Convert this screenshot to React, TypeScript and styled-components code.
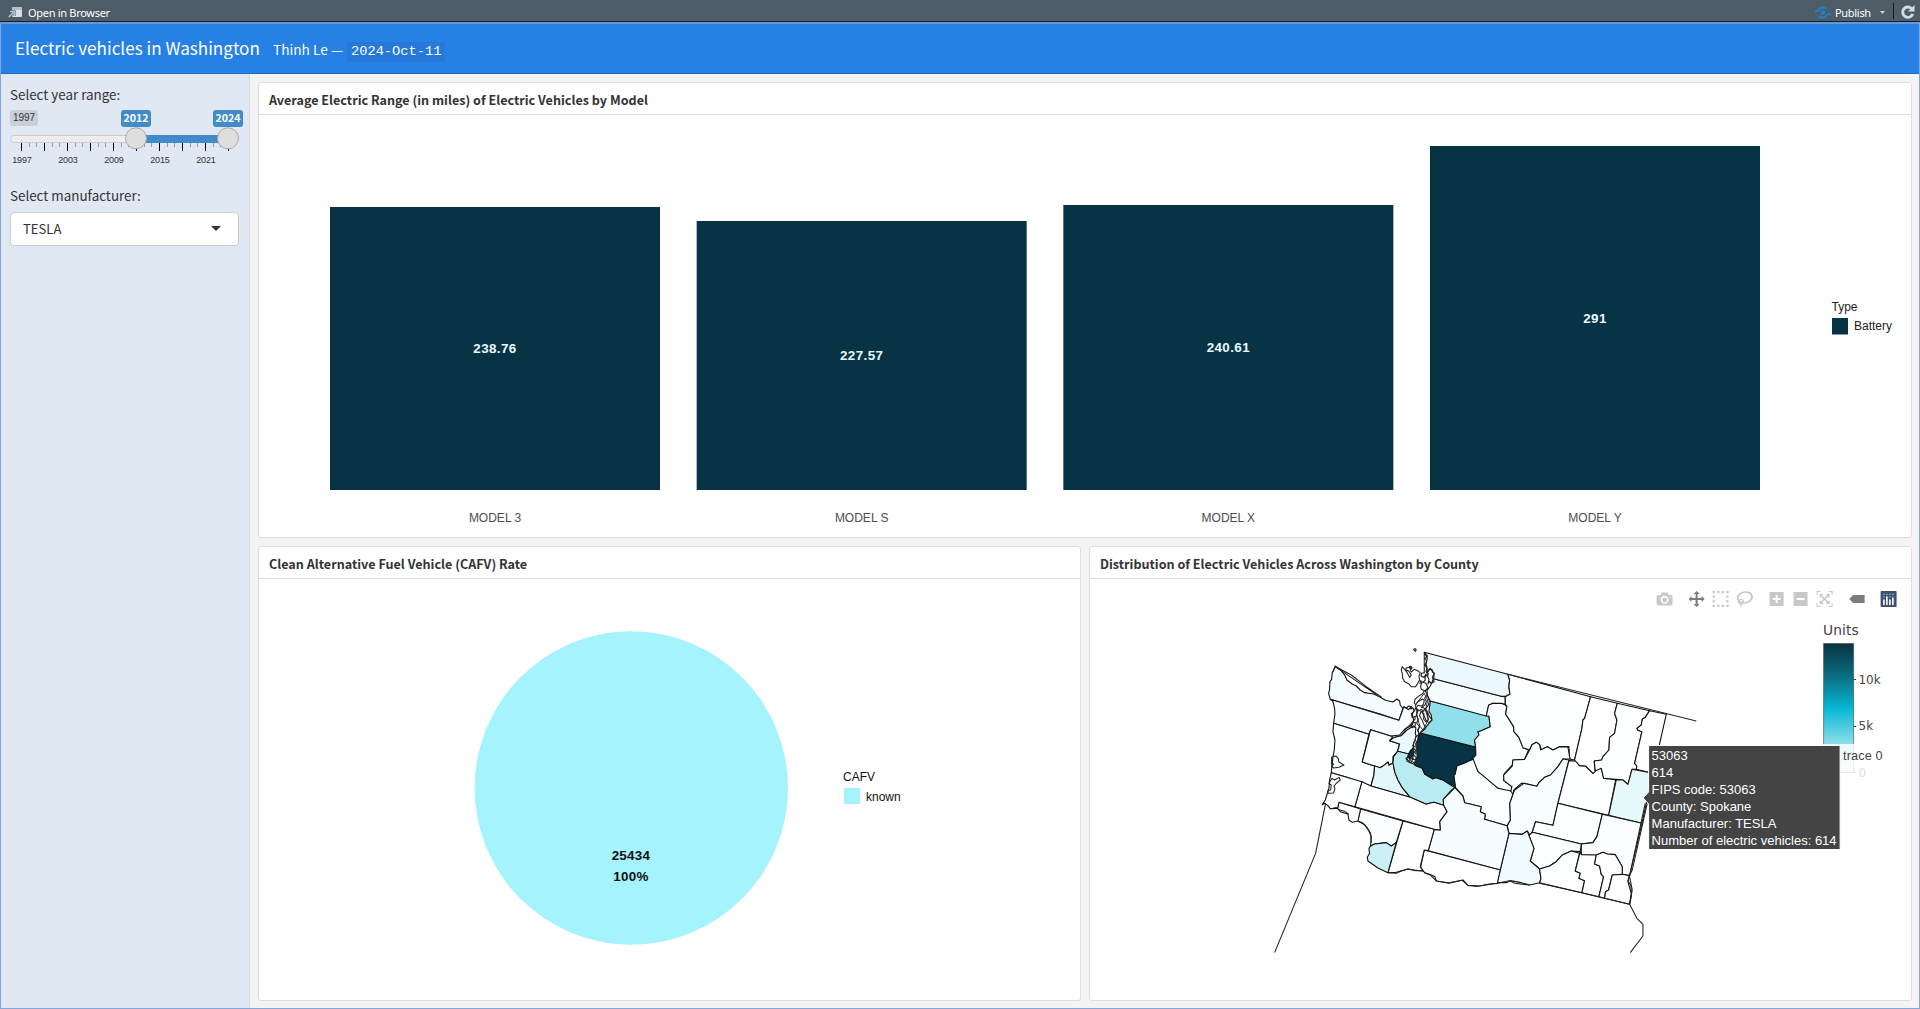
import React from 'react';
import styled, { createGlobalStyle } from 'styled-components';

const ui = `"Noto Sans CJK SC", "Noto Sans", sans-serif`;
const arial = `"Liberation Sans", Arial, sans-serif`;

const GlobalStyle = createGlobalStyle`
  * { box-sizing: border-box; }
  body { margin: 0; background: #f4f4f4; font-family: ${ui}; color: #333; }
`;

const Viewer = styled.div`
  display: flex;
  flex-direction: column;
  width: 1920px;
  height: 1009px;
  overflow: hidden;
`;

const Toolbar = styled.div`
  display: flex;
  flex: none;
  align-items: center;
  height: 22px;
  padding: 4px 5px 0 8px;
  background: #4e5c68;
  border-bottom: 1px solid #0f2233;
  color: #fff;
  font: 11px/16px "Noto Sans", sans-serif;
`;

const ToolbarText = styled.span<{ $width: number; $gap: number }>`
  width: ${p => p.$width}px;
  margin-left: ${p => p.$gap}px;
  white-space: nowrap;
  letter-spacing: -0.3px;
`;

const Spacer = styled.div`
  flex: 1;
`;

const ToolbarDivider = styled.div`
  width: 1px;
  height: 16px;
  margin: -3px 7px 0 8px;
  background: #101820;
`;

const Frame = styled.div`
  display: flex;
  flex: 1;
  flex-direction: column;
  min-height: 0;
  border: 1px solid #83a7dc;
  border-top: 2px solid #6d96cd;
`;

const Header = styled.header`
  display: flex;
  flex: none;
  align-items: baseline;
  height: 50px;
  padding: 10px 14px 0;
  background: #2780e3;
  border-bottom: 1px solid #186dc8;
  color: #fff;
`;

const Title = styled.h1`
  width: 258px;
  margin: 0;
  font-size: 17.1px;
  font-weight: 400;
  line-height: 27px;
  white-space: nowrap;
`;

const Author = styled.span`
  width: 74px;
  font-size: 13.7px;
  font-weight: 400;
  white-space: nowrap;
`;

const DateCode = styled.code`
  padding: 2px 4px;
  border-radius: 2px;
  background: #2679d8;
  font: 13.7px/16px "Liberation Mono", monospace;
`;

const Page = styled.div`
  display: flex;
  flex: 1;
  min-height: 0;
`;

const Sidebar = styled.aside`
  display: flex;
  flex: none;
  flex-direction: column;
  width: 249px;
  padding: 8px 9px 0;
  background: #e0e8f3;
  border-right: 1px solid #dadde2;
`;

const FieldLabel = styled.label`
  height: 24px;
  font-size: 13.4px;
  line-height: 24px;
  white-space: nowrap;
`;

const Slider = styled.div`
  position: relative;
  width: 230px;
  height: 77px;
  margin-top: 1px;
  margin-bottom: -1px;
`;

const SliderBadge = styled.span<{ $left: number; $muted?: boolean }>`
  position: absolute;
  top: 3px;
  left: ${p => p.$left}px;
  width: ${p => (p.$muted ? 28 : 30)}px;
  height: ${p => (p.$muted ? 16 : 17)}px;
  border-radius: 3px;
  background: ${p => (p.$muted ? '#c9d0da' : '#428bca')};
  color: ${p => (p.$muted ? '#333' : '#fff')};
  font-family: ${p => (p.$muted ? arial : ui)};
  font-size: ${p => (p.$muted ? 10 : 10.6)}px;
  font-weight: ${p => (p.$muted ? 400 : 700)};
  line-height: 16px;
  text-align: center;
`;

const SliderScale = styled.svg`
  display: block;
  width: 240px;
  height: 70px;
  overflow: visible;
`;

const Select = styled.div`
  display: flex;
  align-items: center;
  justify-content: space-between;
  width: 229px;
  height: 34px;
  margin-top: 5px;
  padding: 0 17px 2px 12px;
  border: 1px solid #ccc;
  border-radius: 4px;
  background: #fff;
  font-size: 13.1px;
`;

const Caret = styled.div`
  border: 5px solid transparent;
  border-top-color: #333;
  border-bottom-width: 0;
`;

const Main = styled.main`
  display: flex;
  flex: 1;
  flex-direction: column;
  gap: 8px;
  padding: 8px 7px 7px 8px;
  background: #f4f4f4;
`;

const Row = styled.div<{ $height?: number }>`
  display: flex;
  flex: ${p => (p.$height ? 'none' : 1)};
  height: ${p => (p.$height ? p.$height + 'px' : 'auto')};
  gap: 8px;
  min-height: 0;
`;

const Card = styled.section`
  display: flex;
  flex: 1;
  flex-direction: column;
  min-width: 0;
  border: 1px solid #dedede;
  border-radius: 3px;
  background: #fff;
`;

const CardTitle = styled.h2`
  flex: none;
  height: 32px;
  margin: 0;
  padding: 1px 10px 0;
  border-bottom: 1px solid #dedede;
  font-size: 12.6px;
  font-weight: 700;
  line-height: 32px;
  white-space: nowrap;
`;

const Plot = styled.svg`
  display: block;
  flex: 1;
  min-height: 0;
  width: 100%;
  overflow: visible;
  font-family: ${arial};
`;

const models = [
  { name: 'MODEL 3', range: 238.76, labelY: 353 },
  { name: 'MODEL S', range: 227.57, labelY: 360 },
  { name: 'MODEL X', range: 240.61, labelY: 352 },
  { name: 'MODEL Y', range: 291, labelY: 323.3 },
];

function RangeChart() {
  return (
    <Plot viewBox="259 115 1652 422" preserveAspectRatio="none">
      {models.map((m, i) => {
        const h = Math.ceil((m.range / 291) * 344 - 0.1);
        const x = 330 + i * 366.67;
        return (
          <g key={m.name} textAnchor="middle">
            <rect x={x} y={490 - h} width={330} height={h} fill="#083344" />
            <text x={x + 165} y={m.labelY} fontSize="13.4" fontWeight="700" letterSpacing="0.4" fill="#e8fbff">{m.range}</text>
            <text x={x + 165} y={522} fontSize="12" fill="#4d4d4d">{m.name}</text>
          </g>
        );
      })}
      <text x="1831.5" y="311" fontSize="12" fill="#222">Type</text>
      <rect x="1832" y="318" width="16" height="16.5" fill="#083344" />
      <text x="1854" y="330.2" fontSize="12" fill="#222">Battery</text>
    </Plot>
  );
}

function CafvChart() {
  return (
    <Plot viewBox="259 579 821 421" preserveAspectRatio="none">
      <circle cx="631.3" cy="788" r="156.7" fill="#a5f3fc" />
      <g fontSize="13.4" fontWeight="700" textAnchor="middle" letterSpacing="0.3" fill="#111">
        <text x="631" y="860.4">25434</text>
        <text x="631" y="881.4">100%</text>
      </g>
      <text x="843" y="781" fontSize="12" fill="#111">CAFV</text>
      <rect x="844" y="788" width="16" height="16" fill="#a5f3fc" />
      <text x="866" y="801" fontSize="12" fill="#111">known</text>
    </Plot>
  );
}

/* County outlines, in thirds of a pixel from the map's own origin. */
const counties: { name: string; fill: string; points: string }[] = [
  { name: 'Clallam', fill: '#f5fcff', points: '77,80 68,98 66,118 61,125 60,148 57,160 62,178 212,222 268,241 280,205 272,195 270,183 262,177 250,186 228,181 210,170 192,162 165,158 152,150 140,138 128,132 112,120 105,105 95,92' },
  { name: 'Jefferson', fill: '#f7fdff', points: '62,178 70,184 75,205 76,222 72,250 178,283 183,269 244,288 270,285 285,268 308,255 312,240 308,222 314,210 305,200 297,209 283,200 268,241' },
  { name: 'Grays Harbor', fill: '#fcffff', points: '72,250 70,275 76,300 74,330 70,352 65,398 110,411 184,438 193,405 195,378 158,366 178,283' },
  { name: 'Mason', fill: '#fbffff', points: '183,269 158,366 195,378 210,383 225,375 235,366 238,374 250,370 250,350 264,334 270,312 240,302 250,290' },
  { name: 'Kitsap', fill: '#eaf9fe', points: '240,302 255,292 275,287 292,270 312,258 319,264 317,280 321,292 312,310 311,325 302,332 297,342 264,334 270,312' },
  { name: 'Thurston', fill: '#e5f7fd', points: '195,378 213,383 226,374 236,366 238,376 252,368 252,380 256,398 265,420 278,443 302,472 184,438 193,405' },
  { name: 'Pierce', fill: '#b8ebf2', points: '264,334 298,342 291,356 300,366 312,372 320,378 338,385 345,402 370,417 378,410 400,420 436,443 427,449 401,478 402,496 373,487 362,489 350,493 302,472 278,443 265,420 256,398 250,370 252,350' },
  { name: 'King', fill: '#083344', points: '332,279 496,321 499,345 491,358 460,371 442,378 437,402 433,406 439,440 400,420 378,413 370,416 346,402 338,385 318,376 313,367 319,355 317,320 324,300' },
  { name: 'Vashon', fill: '#083344', points: '311,323 314,335 308,350 298,355 296,346' },
  { name: 'Snohomish', fill: '#91dfeb', points: '362,183 538,228 542,260 515,272 505,275 508,285 495,300 498,321 332,279 345,268 350,260 367,240 365,225 358,215' },
  { name: 'Skagit', fill: '#f6fdff', points: '372,116 575,169 587,170 587,192 550,190 537,196 530,228 362,183 353,165 352,152 362,138' },
  { name: 'Whatcom', fill: '#ebf8fd', points: '344,37 595,103 600,120 598,140 601,163 590,168 575,169 372,116 374,100 362,86 353,98 352,82 349,72 353,55' },
  { name: 'Chelan', fill: '#fbffff', points: '530,228 537,196 550,190 575,190 587,195 592,200 588,222 612,260 613,275 628,292 640,323 657,330 645,358 610,360 608,375 585,400 582,422 605,438 607,460 565,445 540,425 505,395 488,358 499,345 498,321 495,300 508,285 505,275 515,272 542,260 538,228' },
  { name: 'Okanogan', fill: '#fdffff', points: '595,103 843,170 825,235 820,240 817,265 795,360 780,357 778,320 750,320 730,330 713,320 696,330 690,314 680,307 667,314 660,330 640,323 628,292 613,275 612,260 588,222 592,200 587,192 587,170 601,163 598,140 600,120' },
  { name: 'Douglas', fill: '#fdffff', points: '660,330 667,314 680,307 690,314 693,330 713,320 730,330 750,320 775,321 780,350 782,357 760,357 745,380 723,405 705,412 688,428 682,439 643,430 635,430 613,450 610,462 602,460 607,440 583,422 582,405 608,378 610,360 645,358' },
  { name: 'Grant', fill: '#f8fdff', points: '610,462 615,450 643,430 682,439 688,428 705,412 723,405 745,380 760,357 778,360 745,490 730,556 678,545 668,575 662,587 653,573 638,583 598,580 593,557 602,540 600,490' },
  { name: 'Lincoln', fill: '#feffff', points: '778,362 800,363 810,377 828,378 850,400 858,385 875,385 882,412 918,420 897,526 745,490' },
  { name: 'Ferry', fill: '#ffffff', points: '843,170 923,190 915,220 922,240 915,280 900,292 898,330 880,350 876,360 854,363 855,380 857,395 850,400 828,378 810,377 795,360 817,265 820,240 825,235' },
  { name: 'Stevens', fill: '#feffff', points: '923,190 1020,212 1007,232 998,238 995,255 982,265 985,271 997,275 975,370 982,378 980,388 967,388 955,433 940,420 918,418 882,415 875,385 857,393 854,363 876,360 880,350 898,330 900,292 915,280 922,240 915,220' },
  { name: 'Pend Oreille', fill: '#ffffff', points: '1020,212 1070,223 1030,400 980,388 982,378 975,370 997,275 985,271 982,265 995,255 998,238 1007,232' },
  { name: 'Spokane', fill: '#e7f8fb', points: '967,388 1030,400 1010,490 997,550 897,526 920,420 940,420 955,433' },
  { name: 'Adams', fill: '#feffff', points: '745,490 878,523 862,590 850,608 815,612 668,577 678,545 730,556' },
  { name: 'Whitman', fill: '#fbfeff', points: '878,523 997,550 960,707 937,703 938,680 917,644 893,642 880,637 860,645 815,646 815,612 850,608 862,590' },
  { name: 'Franklin', fill: '#fbffff', points: '668,577 815,612 812,635 785,633 758,645 740,665 720,678 690,687 662,663 673,625 658,587' },
  { name: 'Benton', fill: '#f0faff', points: '598,580 638,583 653,573 673,625 662,663 690,687 694,715 690,728 660,735 635,728 602,722 590,728 563,728' },
  { name: 'Walla Walla', fill: '#fbffff', points: '690,687 720,678 740,665 758,645 785,633 810,640 797,693 812,700 808,715 825,722 817,758 690,730 694,715' },
  { name: 'Columbia', fill: '#ffffff', points: '812,633 815,644 860,645 855,672 870,678 875,703 882,710 868,770 817,758 825,722 808,715 812,700 797,693' },
  { name: 'Garfield', fill: '#ffffff', points: '860,645 880,637 893,642 917,644 938,680 938,703 908,705 897,750 888,755 885,775 868,770 882,710 875,703 870,678 855,672' },
  { name: 'Asotin', fill: '#ffffff', points: '908,705 938,703 960,707 955,725 965,760 960,793 885,775 888,755 897,750' },
  { name: 'Kittitas', fill: '#fbffff', points: '491,358 505,395 530,415 565,445 603,453 610,462 600,490 602,540 592,557 525,538 527,523 512,515 515,500 465,488 460,468 438,443 433,406 437,402 442,378 460,371' },
  { name: 'Yakima', fill: '#f7fdff', points: '436,443 460,468 465,488 515,500 512,515 527,523 525,538 592,557 598,580 572,690 356,632 374,568 392,570 390,545 412,515 402,496 401,478' },
  { name: 'Klickitat', fill: '#ffffff', points: '344,630 572,690 563,730 540,732 505,739 475,736 460,720 418,730 380,723 376,710 360,703 345,698 333,682' },
  { name: 'Skamania', fill: '#ffffff', points: '280,543 374,568 356,632 344,630 332,680 340,693 312,691 295,687 260,697 235,698' },
  { name: 'Lewis', fill: '#ffffff', points: '157,425 184,438 302,472 350,493 362,489 373,487 402,496 412,515 390,545 392,570 374,568 136,500' },
  { name: 'Cowlitz', fill: '#fbfeff', points: '153,507 280,543 260,608 245,618 230,608 195,612 183,618 185,590 178,573 165,554 145,543' },
  { name: 'Clark', fill: '#cbf0f7', points: '183,618 195,612 230,608 245,618 260,608 235,698 205,684 175,663 173,652 180,640 178,625' },
  { name: 'Wahkiakum', fill: '#ffffff', points: '88,487 153,507 145,543 128,547 118,540 115,522 92,515 84,505' },
  { name: 'Pacific', fill: '#feffff', points: '65,398 157,425 136,500 88,487 84,505 62,506 55,497 46,490 38,494 47,480 58,445 60,420' },
];

/* Shorelines, straits and islands drawn as open or closed outlines. */
const shores = [
  'M77,80L200,164 M77,80L68,98 M75,77L97,90 125,105 170,140 215,171',
  'M595,103L1160,243',
  'M48,490L18,640 -105,938',
  'M1013,490L968,690 959,708 955,722 964,737 966,765 960,793 982,835 1000,853 1000,888 962,938',
  'M1007,490L960,707 M960,710L968,750 960,793',
  'M66,372L66,352 78,348 86,355 88,366 103,375 88,382 72,384 66,378 72,372Z',
  'M67,415L75,420 88,412 92,420 80,430 73,438 76,446 72,459 56,460 54,452 63,450 65,435 58,430 67,415',
  'M278,80L285,88 293,98 300,112 305,105 298,94 290,90 289,84 303,81 307,84 302,90 305,96 314,88 324,92 332,98 328,108 330,120 322,134 318,140 305,140 297,131 285,125 279,114 278,100 275,90Z',
  'M312,28L316,26 320,30 317,34Z M299,80L304,79 307,84 302,87Z',
  'M344,37L344,100 M346,40L354,48 347,55 351,65 346,75 352,85 349,95 356,100 354,110 348,103 346,115',
  'M352,98L360,86 368,89 368,96 374,100 368,112 374,125 365,130 360,124 355,132 358,118 353,108Z',
  'M344,98L336,100 334,108 341,112 345,108 347,120 340,127 333,122 331,132 M337,126L349,130 355,144 346,153 335,148 333,138Z',
  'M344,153L338,162 325,170 316,178 314,190 319,194 324,186 338,177 344,180 342,191 337,199 325,196 319,204 328,212 335,208 344,214',
  'M347,153L353,165 359,183 356,196 348,206 353,215 360,230 367,240 358,248 350,242 344,229 337,216 347,207',
  'M353,165L345,174 350,184 347,194 338,201 M334,202L343,204 353,218 356,239 349,246 342,237 343,221 334,213 330,228 337,239 342,251 348,264 337,272 330,281',
  'M283,200L291,204 297,198 305,200 303,207 312,205 314,214 305,221 308,233 317,229 316,238 309,246 300,256 288,266 284,276 275,286 256,292',
  'M316,205L325,213 320,226 326,238 321,249 330,260 325,272 328,283 318,290 317,302 311,312 312,325 318,331 311,343 320,353 318,359 309,358 304,369 293,364 289,355 300,352 301,358 313,354',
  'M331,258L324,270 329,284 325,299 318,311 320,327 318,343 M308,316L316,320 M317,247L308,248 304,258 309,263 317,258Z',
  'M145,543L160,549 172,562 183,580 185,608 M235,698L260,700 275,693 295,687 315,690 340,693',
  'M345,698L362,705 380,723 417,728 458,721 475,736 510,738 562,730 600,722 615,730 660,735',
  'M62,506L70,505 82,502 M88,509L105,514 117,522',
  'M690,728L960,793',
];

function Gradient() {
  return (
    <defs>
      <linearGradient id="units" x1="0" y1="0" x2="0" y2="1">
        <stop offset="0" stopColor="#083344" />
        <stop offset="0.25" stopColor="#0b6d80" />
        <stop offset="0.5" stopColor="#06b6d4" />
        <stop offset="0.78" stopColor="#8ddfeb" />
        <stop offset="1" stopColor="#ecfeff" />
      </linearGradient>
    </defs>
  );
}

const modebar: { x: number; active?: boolean; d: string }[] = [
  { x: 1657, d: 'm500 450c-83 0-150-67-150-150 0-83 67-150 150-150 83 0 150 67 150 150 0 83-67 150-150 150z m400 150h-120c-16 0-34 13-39 29l-31 93c-6 15-23 28-40 28h-340c-16 0-34-13-39-28l-31-94c-6-15-23-28-40-28h-120c-55 0-100-45-100-100v-450c0-55 45-100 100-100h800c55 0 100 45 100 100v450c0 55-45 100-100 100z m-400-550c-138 0-250 112-250 250 0 138 112 250 250 250 138 0 250-112 250-250 0-138-112-250-250-250z m365 380c-19 0-35 16-35 35 0 19 16 35 35 35 19 0 35-16 35-35 0-19-16-35-35-35z' },
  { x: 1689, active: true, d: 'm1000 350l-187 188 0-125-250 0 0 250 125 0-188 187-187-187 125 0 0-250-250 0 0 125-188-188 186-187 0 125 252 0 0-250-125 0 187-188 188 188-125 0 0 250 250 0 0-126 187 188z' },
  { x: 1713, d: 'm0 850l0-143 143 0 0 143-143 0z m286 0l0-143 143 0 0 143-143 0z m285 0l0-143 143 0 0 143-143 0z m286 0l0-143 143 0 0 143-143 0z m-857-286l0-143 143 0 0 143-143 0z m857 0l0-143 143 0 0 143-143 0z m-857-285l0-143 143 0 0 143-143 0z m857 0l0-143 143 0 0 143-143 0z m-857-286l0-143 143 0 0 143-143 0z m286 0l0-143 143 0 0 143-143 0z m285 0l0-143 143 0 0 143-143 0z m286 0l0-143 143 0 0 143-143 0z' },
  { x: 1737, d: 'm1018 538c-36 207-290 336-568 286-277-48-473-256-436-463 10-57 36-108 76-151-13-66 11-137 68-183 34-28 75-41 114-42l-55-70 0 0c-2-1-3-2-4-3-10-14-8-34 5-45 14-11 34-8 45 4 1 1 2 3 2 5l0 0 113 140c16 11 31 24 45 40 4 3 6 7 8 11 48-3 100 0 151 9 278 48 473 255 436 462z m-624-379c-80 14-149 48-197 96 42 42 109 47 156 9 33-26 47-66 41-105z m-187-74c-19 16-33 37-39 60 50-32 109-55 174-68-42-25-95-24-135 8z m360 75c-34-7-69-9-102-8 8 62-16 128-68 170-73 59-175 54-244-5-9 20-16 40-20 61-28 159 121 317 333 354s407-60 434-217c28-159-121-318-333-355z' },
  { x: 1770, d: 'm1 787l0-875 875 0 0 875-875 0z m687-500l-187 0 0-187-125 0 0 187-188 0 0 125 188 0 0 187 125 0 0-187 187 0 0-125z' },
  { x: 1794, d: 'm0 788l0-876 875 0 0 876-875 0z m688-500l-500 0 0 125 500 0 0-125z' },
  { x: 1817, d: 'm250 850l-187 0-63 0 0-62 0-188 63 0 0 188 187 0 0 62z m688 0l-188 0 0-62 188 0 0-188 62 0 0 188 0 62-62 0z m-875-938l0 188-63 0 0-188 0-62 63 0 187 0 0 62-187 0z m875 188l0-188-188 0 0-62 188 0 62 0 0 62 0 188-62 0z m-125 188l-1 0-93-94-156 156 156 156 92-93 2 0 0 250-250 0 0-2 93-92-156-156-156 156 94 92 0 2-250 0 0-250 0 0 93 93 157-156-157-156-93 94 0 0 0-250 250 0 0 0-94 93 156 157 156-157-93-93 0 0 250 0 0 250z' },
];

const hoverLines = ['53063', '614', 'FIPS code: 53063', 'County: Spokane', 'Manufacturer: TESLA', 'Number of electric vehicles: 614'];

function CountyMap() {
  return (
    <Plot viewBox="1090.4 579 821 421" preserveAspectRatio="none">
      <Gradient />
      <g transform="translate(1310 640) scale(0.33333)" stroke="#111" strokeWidth="3.3" strokeLinejoin="round">
        {counties.map(c => <polygon key={c.name} points={c.points} fill={c.fill} />)}
        <path d="M319,292L312,310 312,350 298,360 314,368 322,350 321,310 327,285Z M344,160L335,172 317,195 325,240 332,260 340,270 356,240 348,210 354,180Z" fill="#fff" strokeWidth="2.5" />
        <g fill="none" stroke="#222" strokeWidth="3.2">
          {shores.map(d => <path key={d} d={d} />)}
        </g>
      </g>

      {modebar.map(b => (
        <g key={b.x} transform={`translate(${b.x} 591) scale(0.016)`}>
          <path transform="matrix(1 0 0 -1 0 850)" d={b.d} fill={b.active ? '#7c7c7c' : '#c8c8c8'} />
        </g>
      ))}
      <path d="M1849.5 599l4-4h11.5v8h-11.5z" fill="#7c7c7c" />
      <rect x="1881" y="591" width="16" height="16" rx="0.8" fill="#3f4f75" />
      <g fill="#80cfbe">
        {[1884, 1887, 1890, 1893].map(x => <circle key={x} cx={x + 0.3} cy="594.3" r="0.8" />)}
        <circle cx="1884.3" cy="597" r="0.8" /><circle cx="1890.3" cy="597" r="0.8" /><circle cx="1893.3" cy="597" r="0.8" />
      </g>
      <path d="M1884.3 600v4.5M1887.3 597v7.5M1890.3 600v4.5M1893.3 598.5v6" stroke="#fff" strokeWidth="1.6" strokeLinecap="round" />

      <g fontFamily="'DejaVu Sans', Verdana, sans-serif" fill="#444">
        <text x="1823.5" y="635" fontSize="13.8" textLength="35.5">Units</text>
        <text x="1859" y="684" fontSize="12" textLength="22">10k</text>
        <text x="1859" y="730" fontSize="12" textLength="14.5">5k</text>
        <text x="1859" y="777" fontSize="12">0</text>
      </g>
      <rect x="1824" y="643.5" width="30" height="129" fill="url(#units)" stroke="#444" strokeOpacity="0.6" />
      <path d="M1854 679.5h2.5M1854 726.5h2.5M1854 772.5h2.5" stroke="#444" />
      <rect x="1806" y="744" width="90" height="35" fill="#fff" fillOpacity="0.82" />
      <text x="1843.5" y="759.5" fontSize="12.7" textLength="39.5" fill="#444">trace 0</text>

      <path d="M1643.5 798l5.5-6V745.5H1840.5V849.5H1649V804z" fill="#444" stroke="#fff" strokeWidth="1" />
      <g fill="#fff" fontSize="13">
        {hoverLines.map((line, i) => <text key={line} x="1652" y={760 + i * 17}>{line}</text>)}
      </g>
    </Plot>
  );
}

const years = [1997, 2003, 2009, 2015, 2021];

function YearSlider() {
  return (
    <Slider>
      <SliderScale viewBox="10 107 240 70">
        <rect x="10.5" y="135.5" width="228" height="7" rx="3.5" fill="#eee" stroke="#ccc" />
        <rect x="136" y="135" width="92" height="8" fill="#428bca" />
        {Array.from({ length: 28 }, (_, i) => {
          const major = i % 3 === 0;
          return <rect key={i} x={Math.round(21 + i * 7.667)} y={143} width={1} height={major ? 8 : 4} fill={major ? '#000' : '#999'} />;
        })}
        <g fontFamily={arial} fontSize="9" textAnchor="middle" fill="#333">
          {years.map((y, i) => <text key={y} x={22 + i * 46} y={162.5} textLength="19.5">{y}</text>)}
        </g>
        <circle cx="136" cy="138.3" r="10.5" fill="#dedede" stroke="#aaa" />
        <circle cx="228" cy="138.3" r="10.5" fill="#dedede" stroke="#aaa" />
      </SliderScale>
      <SliderBadge $left={0} $muted>1997</SliderBadge>
      <SliderBadge $left={111}>2012</SliderBadge>
      <SliderBadge $left={203}>2024</SliderBadge>
    </Slider>
  );
}

export default function App() {
  return (
    <Viewer>
      <GlobalStyle />
      <Toolbar>
        <svg width="15" height="12" viewBox="0 0 15 12">
          <rect x="4" y="0" width="10" height="10" rx="1" fill="#dbe0e5" />
          <rect x="4" y="0" width="10" height="3" rx="1" fill="#a9c2d8" />
          <path d="M0.8 10l4.5-4.5M2 4.5h4.3V9" fill="none" stroke="#4e5c68" strokeWidth="2.6" />
          <path d="M0.8 10l4.5-4.5M2 4.5h4.3V9" fill="none" stroke="#b8bfc6" strokeWidth="1.7" />
        </svg>
        <ToolbarText $gap={5} $width={90}>Open in Browser</ToolbarText>
        <Spacer />
        <svg width="16" height="14" viewBox="0 0 16 14">
          <circle cx="7.8" cy="6.5" r="2.3" fill="#1a86c7" />
          <path d="M0 5.2h3.2M3 5C4.5 1.2 9 0.6 11.5 2.8M15.8 8.2h-3.2M12.6 8C11 12 6.5 12.5 4 10.2" fill="none" stroke="#1a86c7" strokeWidth="2" />
        </svg>
        <ToolbarText $gap={4} $width={45}>Publish</ToolbarText>
        <svg width="5" height="4" viewBox="0 0 5 4"><path d="M0 0h5L2.5 3z" fill="#ccd0d4" /></svg>
        <ToolbarDivider />
        <svg width="14" height="15" viewBox="0 0 14 15">
          <path d="M10.5 3.4A5.2 5.2 0 1 0 11.8 9" fill="none" stroke="#d5dae3" strokeWidth="2.8" />
          <path d="M13.5 0v6.5H7z" fill="#d5dae3" />
        </svg>
      </Toolbar>
      <Frame>
        <Header>
          <Title>Electric vehicles in Washington</Title>
          <Author>Thinh Le —</Author>
          <DateCode>2024-Oct-11</DateCode>
        </Header>
        <Page>
          <Sidebar>
            <FieldLabel>Select year range:</FieldLabel>
            <YearSlider />
            <FieldLabel>Select manufacturer:</FieldLabel>
            <Select>TESLA<Caret /></Select>
          </Sidebar>
          <Main>
            <Row $height={456}>
              <Card>
                <CardTitle>Average Electric Range (in miles) of Electric Vehicles by Model</CardTitle>
                <RangeChart />
              </Card>
            </Row>
            <Row>
              <Card>
                <CardTitle>Clean Alternative Fuel Vehicle (CAFV) Rate</CardTitle>
                <CafvChart />
              </Card>
              <Card>
                <CardTitle>Distribution of Electric Vehicles Across Washington by County</CardTitle>
                <CountyMap />
              </Card>
            </Row>
          </Main>
        </Page>
      </Frame>
    </Viewer>
  );
}
